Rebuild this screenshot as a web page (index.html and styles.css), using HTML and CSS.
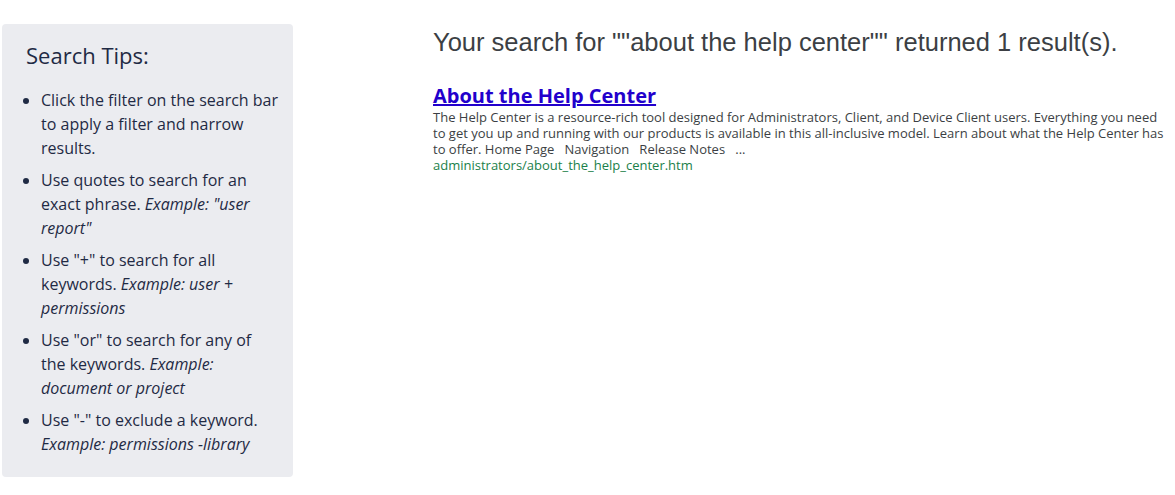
FILE: index.html
```html
<!DOCTYPE html>
<html lang="en">
<head>
    <meta charset="UTF-8">
    <meta name="viewport" content="width=device-width, initial-scale=1.0">
    <title>Search Results</title>
    <link rel="stylesheet" href="styles.css">
</head>
<body>

    <div class="page">
        <aside class="tips">
            <h3>Search Tips:</h3>
            <ul>
                <li>Click the filter on the search bar to apply a filter and narrow results.</li>
                <li>Use quotes to search for an exact phrase. <em>Example: "user report"</em></li>
                <li>Use "+" to search for all keywords. <em>Example: user + permissions</em></li>
                <li>Use "or" to search for any of the keywords. <em>Example: document or project</em></li>
                <li>Use "-" to exclude a keyword. <em>Example: permissions -library</em></li>
            </ul>
        </aside>

        <main class="results">
            <h1 class="results-heading">Your search for ""about the help center"" returned 1 result(s).</h1>

            <div class="result">
                <a class="result-title" href="#">About the Help Center</a>
                <p class="result-text">The Help Center is a resource-rich tool designed for Administrators, Client, and Device Client users. Everything you need to get you up and running with our products is available in this all-inclusive model. Learn about what the Help Center has to offer. Home Page &nbsp; Navigation &nbsp; Release Notes &nbsp; ...</p>
                <div class="result-url">administrators/about_the_help_center.htm</div>
            </div>
        </main>
    </div>

</body>
</html>
```

FILE: styles.css
```css
/* Page Setup */
html, body {
    margin: 0;
    padding: 0;
    background: #ffffff;
    font-family: "Open Sans", sans-serif;
}

.page {
    display: flex;
    align-items: flex-start;
    padding: 24px 0 0 2px;
}

/* Search Tips Sidebar */
.tips {
    width: 291px;
    height: 453px;
    box-sizing: border-box;
    background: #ebecf0;
    border-radius: 4px;
    padding: 16px 14px 0 24px;
    color: #1f2a44;
}

.tips h3 {
    margin: 0 0 18px 0;
    font-size: 22px;
    font-weight: 400;
    line-height: 30px;
}

.tips ul {
    margin: 0;
    padding-left: 15px;
}

.tips li {
    font-size: 16px;
    line-height: 24px;
    margin-bottom: 8px;
}

.tips li em {
    font-style: italic;
}

/* Results */
.results {
    flex: 1;
    padding-left: 140px;
}

.results-heading {
    margin: 2px 0 0 0;
    font-family: "Liberation Sans", Arial, sans-serif;
    font-size: 25.5px;
    font-weight: 400;
    line-height: 32px;
    color: #3c3f44;
}

.result {
    margin-top: 25px;
}

.result-title {
    font-size: 20px;
    font-weight: 700;
    line-height: 26px;
    color: #2200cc;
    text-decoration: underline;
}

.result-text {
    margin: 0;
    font-size: 13px;
    line-height: 16px;
    color: #3c3f44;
    padding-right: 8px;
}

.result-url {
    font-size: 13px;
    line-height: 17px;
    color: #1a7f4a;
}
```
